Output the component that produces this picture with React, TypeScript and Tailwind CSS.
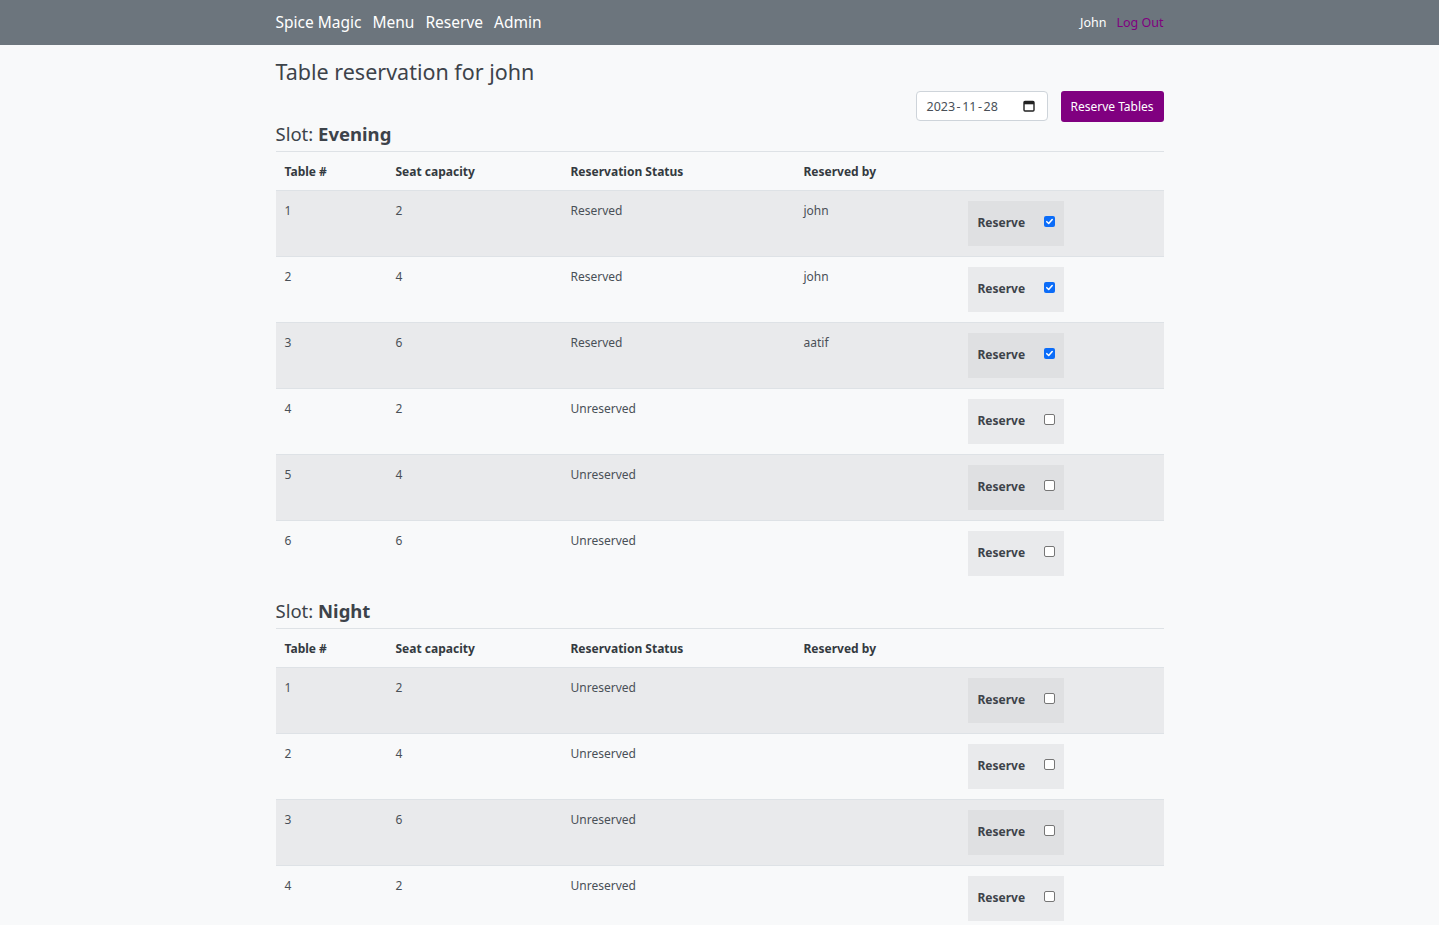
import React from "react";

type Row = { t: number; s: number; status: string; by: string; checked: boolean };

const evening: Row[] = [
  { t: 1, s: 2, status: "Reserved", by: "john", checked: true },
  { t: 2, s: 4, status: "Reserved", by: "john", checked: true },
  { t: 3, s: 6, status: "Reserved", by: "aatif", checked: true },
  { t: 4, s: 2, status: "Unreserved", by: "", checked: false },
  { t: 5, s: 4, status: "Unreserved", by: "", checked: false },
  { t: 6, s: 6, status: "Unreserved", by: "", checked: false },
];

const night: Row[] = [
  { t: 1, s: 2, status: "Unreserved", by: "", checked: false },
  { t: 2, s: 4, status: "Unreserved", by: "", checked: false },
  { t: 3, s: 6, status: "Unreserved", by: "", checked: false },
  { t: 4, s: 2, status: "Unreserved", by: "", checked: false },
  { t: 5, s: 4, status: "Unreserved", by: "", checked: false },
  { t: 6, s: 6, status: "Unreserved", by: "", checked: false },
];

const cols = "grid grid-cols-[111px_175px_233px_164px_205px]";

function Check({ checked }: { checked: boolean }) {
  if (checked) {
    return (
      <span className="inline-flex items-center justify-center w-[11px] h-[11px] rounded-[2px] bg-[#0b6cf8]">
        <svg width="9" height="9" viewBox="0 0 10 10">
          <path d="M2 5.2 L4.1 7.2 L8 2.8" fill="none" stroke="white" strokeWidth="1.7" strokeLinecap="round" strokeLinejoin="round" />
        </svg>
      </span>
    );
  }
  return <span className="inline-block w-[11px] h-[11px] rounded-[2px] border border-[#767676] bg-white" />;
}

function Table({ rows }: { rows: Row[] }) {
  return (
    <div className="border-t border-[#dee2e6]">
      <div className={`${cols} h-[39px] items-center text-[12px] font-bold text-[#343a40] border-b border-[#dee2e6]`}>
        <div className="pl-[9px] pt-[2px]">Table #</div>
        <div className="pl-[9px] pt-[2px]">Seat capacity</div>
        <div className="pl-[9px] pt-[2px]">Reservation Status</div>
        <div className="pl-[9px] pt-[2px]">Reserved by</div>
        <div></div>
      </div>
      {rows.map((r, i) => (
        <div
          key={r.t}
          className={`${cols} text-[12px] text-[#495057] leading-[20px] ${i % 2 === 0 ? "bg-[#e9eaec]" : "bg-[#f8f9fa]"} ${i < rows.length - 1 ? "border-b border-[#dee2e6]" : ""}`}
        >
          <div className="pl-[9px] pt-[10px]">{r.t}</div>
          <div className="pl-[9px] pt-[10px]">{r.s}</div>
          <div className="pl-[9px] pt-[10px]">{r.status}</div>
          <div className="pl-[9px] pt-[10px]">{r.by}</div>
          <div className="pl-[9px] py-[10px]">
            <div className={`flex items-center w-[96px] h-[45px] pl-[10px] pb-[2px] ${i % 2 === 0 ? "bg-[#dfe0e2]" : "bg-[#e9eaec]"}`}>
              <span className="font-bold text-[12px] text-[#3d434a]">Reserve</span>
              <span className="ml-[19px] -mt-[2px] flex">
                <Check checked={r.checked} />
              </span>
            </div>
          </div>
        </div>
      ))}
    </div>
  );
}

export default function App() {
  return (
    <div className="min-h-[925px] bg-[#f8f9fa] font-['Noto_Sans',sans-serif]">
      <nav className="h-[45px] bg-[#6c757d]">
        <div className="w-[888px] mx-auto h-full flex items-center justify-between">
          <div className="flex items-center gap-[11px] text-[15.5px] text-white">
            <span>Spice Magic</span>
            <span>Menu</span>
            <span>Reserve</span>
            <span>Admin</span>
          </div>
          <div className="flex items-center gap-[10px] text-[12.5px] pt-[1px]">
            <span className="text-white">John</span>
            <span className="text-[#800080]">Log Out</span>
          </div>
        </div>
      </nav>
      <main className="w-[888px] mx-auto">
        <h1 className="text-[21.5px] leading-[30px] text-[#3d434a] pt-[12px]">Table reservation for john</h1>
        <div className="flex justify-end gap-[13px] mt-[4px]">
          <div className="w-[132px] h-[30px] bg-white border border-[#ced4da] rounded-[4px] flex items-center justify-between pl-[10px] pr-[12px] pt-[2px] text-[12.5px] text-[#495057]">
            <span>
              2023<span className="px-[1.5px]">-</span>11<span className="px-[1.5px]">-</span>28
            </span>
            <svg width="12" height="12" viewBox="0 0 12 12" className="-mt-[2px]">
              <rect x="1" y="1.5" width="10" height="9.5" rx="1" fill="none" stroke="#222" strokeWidth="1.4" />
              <rect x="1" y="1.5" width="10" height="2.8" fill="#222" />
            </svg>
          </div>
          <button className="w-[103px] h-[31px] bg-[#800080] text-white text-[12px] rounded-[3px] pt-[1px]">Reserve Tables</button>
        </div>
        <h2 className="text-[18.5px] leading-[26px] text-[#3d434a] -mt-[1px] mb-[4px]">
          Slot: <span className="font-bold">Evening</span>
        </h2>
        <Table rows={evening} />
        <h2 className="text-[18.5px] leading-[26px] text-[#3d434a] mt-[12px] mb-[4px]">
          Slot: <span className="font-bold">Night</span>
        </h2>
        <Table rows={night} />
      </main>
    </div>
  );
}
